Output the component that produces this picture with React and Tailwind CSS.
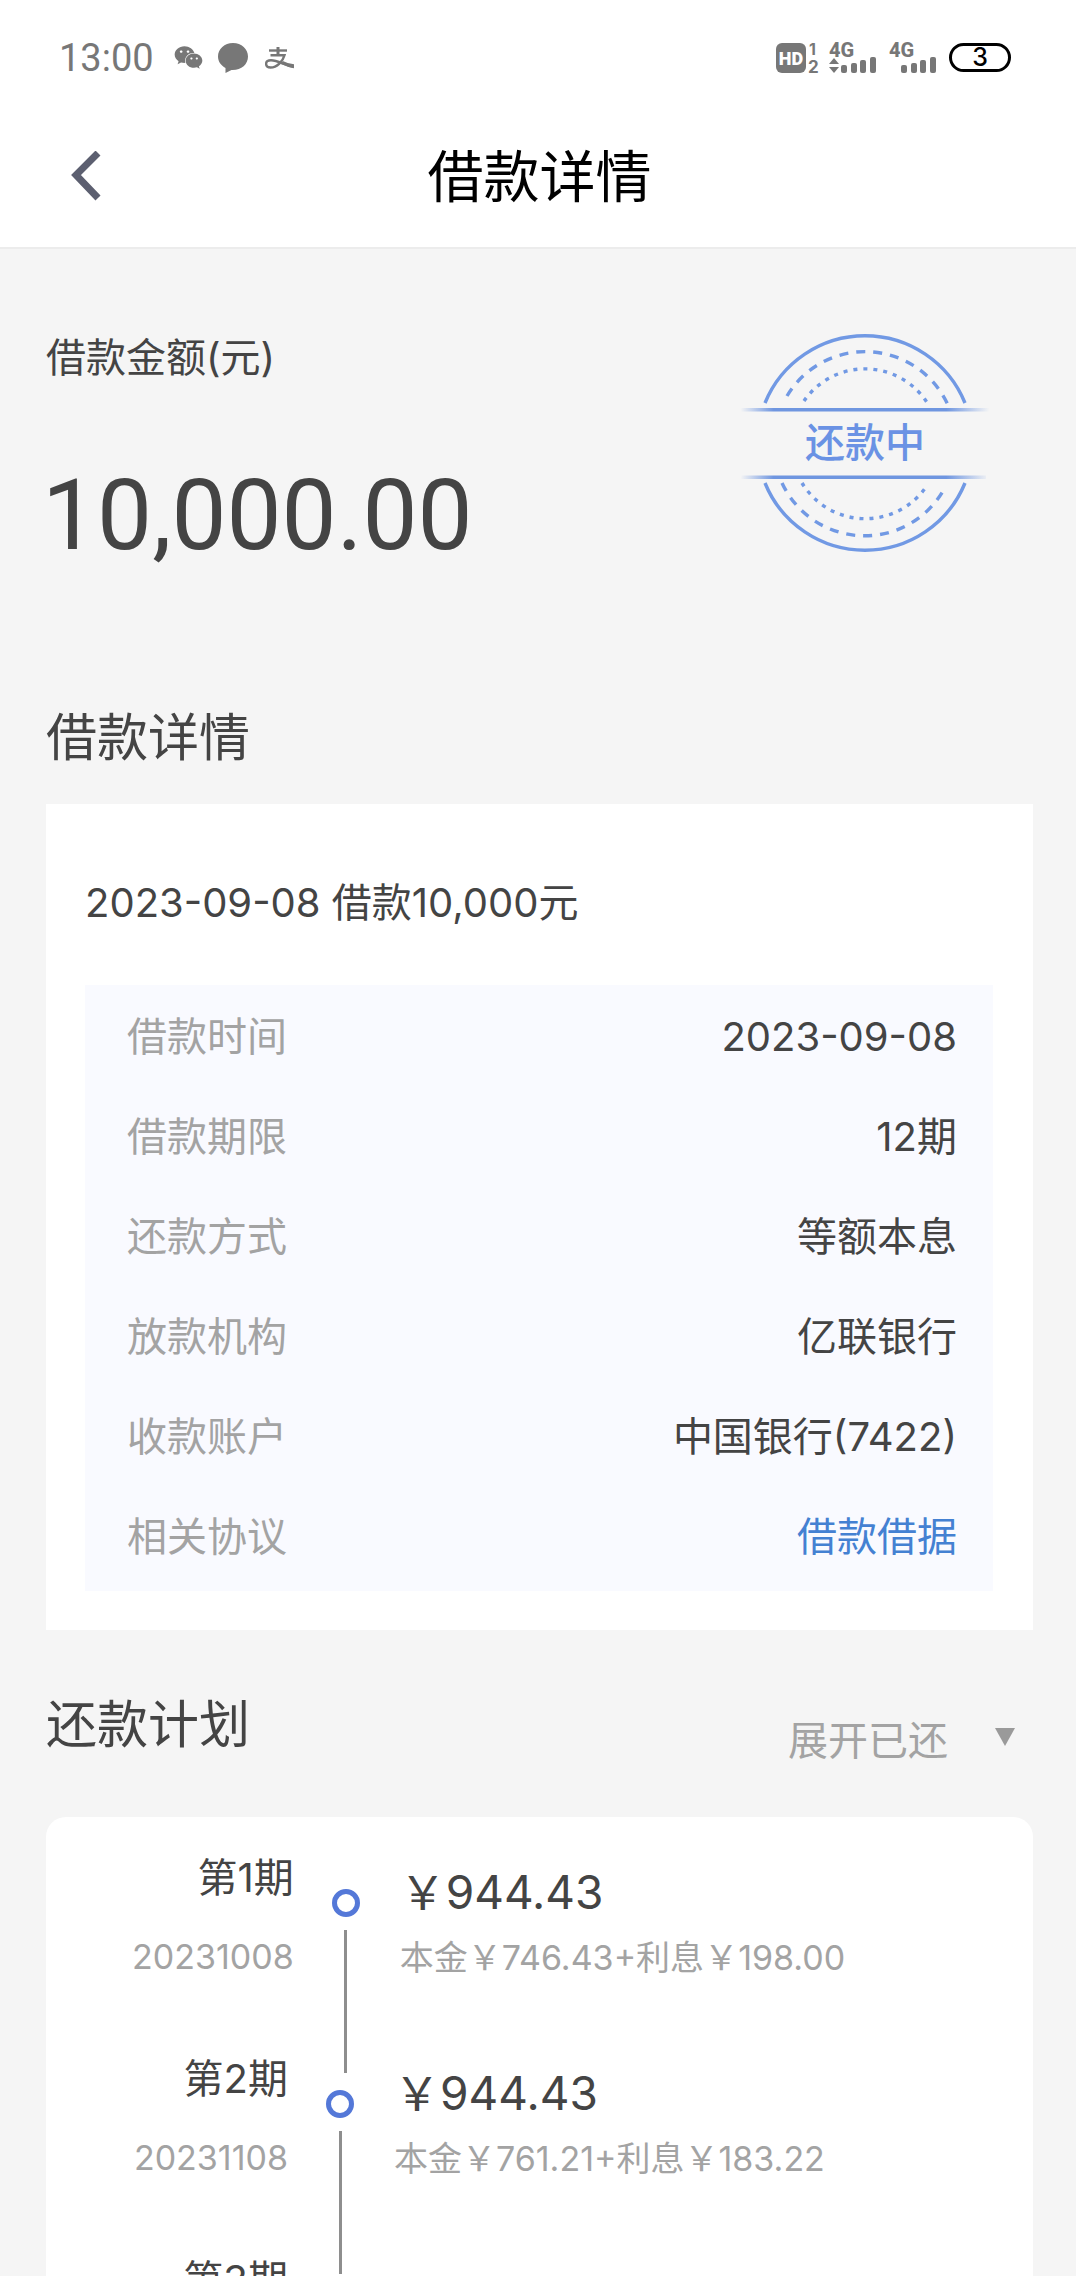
import { useState } from "react";
import { FaWeixin } from "react-icons/fa";

const YUAN = "\uFFE5";

const detalles = [
  { label: "借款时间", value: "2023-09-08" },
  { label: "借款期限", value: "12期" },
  { label: "还款方式", value: "等额本息" },
  { label: "放款机构", value: "亿联银行" },
  { label: "收款账户", value: "中国银行(7422)" },
  { label: "相关协议", value: "借款借据", href: "#contract" },
];

const cuotas = [
  { id: 1, fecha: "20231008", total: "944.43", capital: "746.43", interes: "198.00" },
  { id: 2, fecha: "20231108", total: "944.43", capital: "761.21", interes: "183.22" },
  { id: 3 },
];

function SignalBars({ arrows = false }) {
  return (
    <svg className="overflow-visible" width="48" height="32" viewBox="0 0 48 32" fill="#777777" aria-hidden="true">
      <text x="0" y="15" fontSize="20" fontWeight="800" fontFamily="Roboto, sans-serif">
        4G
      </text>
      {arrows && (
        <>
          <path d="M0 22 L5 16 L10 22 Z" />
          <path d="M0 25 L5 31 L10 25 Z" />
        </>
      )}
      <rect x="12" y="23" width="6" height="8" rx="2" />
      <rect x="22" y="21" width="6" height="10" rx="2" />
      <rect x="31" y="18" width="6" height="13" rx="2" />
      <rect x="41" y="15" width="6" height="16" rx="2" />
    </svg>
  );
}

function StatusBar() {
  return (
    <div className="flex h-[115px] items-center justify-between pl-[59px] pr-[65px] text-[#777777]">
      <div className="flex items-center">
        <span className="font-[Roboto,sans-serif] text-[38px] leading-none">13:00</span>
        <FaWeixin className="ml-5 size-[29px]" />
        <svg className="ml-[15px]" width="30" height="30" viewBox="0 0 30 30" fill="currentColor" aria-hidden="true">
          <path d="M15 0 C6.500 0 0 6 0 13.500 C0 18.500 3 22.500 7.500 25 L7.500 30 L13.500 27 C23 27.500 30 21.500 30 13.500 C30 6 23.500 0 15 0 Z" />
        </svg>
        <svg
          className="ml-[17px]"
          width="29"
          height="22"
          viewBox="0 0 29 22"
          fill="none"
          stroke="currentColor"
          strokeWidth="2.400"
          aria-hidden="true"
        >
          <path d="M4 3.500 H22" />
          <path d="M13 0 V8" strokeWidth="3" />
          <path d="M5.500 8.300 H19.500 C18 14 12 20.500 5.500 20.500 C2.500 20.500 1.100 18.800 1.100 16.800 C1.100 14.500 3.200 13.200 6 13.200 C13 13.200 20 18.500 29 20" />
          <path d="M17 15.500 C21 17.500 25 18.800 29 19" strokeWidth="3.400" />
        </svg>
      </div>
      <div className="flex items-center">
        <svg className="overflow-visible" width="44" height="32" viewBox="0 0 44 32" fill="#777777" aria-hidden="true">
          <rect x="0" y="1" width="30" height="30" rx="6" />
          <text x="15" y="23" fontSize="18" fontWeight="900" fill="#ffffff" textAnchor="middle" fontFamily="Roboto, sans-serif">
            HD
          </text>
          <text x="33" y="13" fontSize="16" fontWeight="700" fontFamily="Inter, sans-serif">
            1
          </text>
          <text x="32" y="31" fontSize="17" fontWeight="700" fontFamily="Inter, sans-serif">
            2
          </text>
        </svg>
        <div className="ml-[9px] flex gap-3">
          <SignalBars arrows />
          <SignalBars />
        </div>
        <div className="ml-3 flex h-[29px] w-[62px] items-center justify-center rounded-full border-[3px] border-black text-[25px] font-medium leading-none text-black">
          3
        </div>
      </div>
    </div>
  );
}

function Stamp() {
  return (
    <svg width="254" height="222" viewBox="0 0 254 222" fill="none" stroke="#7199e4" role="img" aria-label="还款中">
      <defs>
        <linearGradient id="fade" gradientUnits="userSpaceOnUse" x1="0" y1="0" x2="254" y2="0">
          <stop offset="0.010" stopColor="#6f96e0" stopOpacity="0" />
          <stop offset="0.140" stopColor="#6f96e0" />
          <stop offset="0.820" stopColor="#6f96e0" />
          <stop offset="0.990" stopColor="#6f96e0" stopOpacity="0" />
        </linearGradient>
      </defs>
      {/* Semicírculo superior */}
      <path d="M27 72 A108 108 0 0 1 227 72" strokeWidth="3.400" />
      <path d="M49 65 A91 91 0 0 1 210 74" strokeWidth="3.400" strokeDasharray="9 8" />
      <path d="M66 70 A74 74 0 0 1 190 73" strokeWidth="3.400" strokeDasharray="4 6" />
      {/* Semicírculo inferior */}
      <path d="M27 152 A108 108 0 0 0 227 152" strokeWidth="3.400" />
      <path d="M44 152 A91 91 0 0 0 205 160" strokeWidth="3.400" strokeDasharray="9 8" />
      <path d="M64 152 A74 74 0 0 0 188 156" strokeWidth="3.400" strokeDasharray="4 6" />
      <rect x="3" y="77" width="248" height="3.500" fill="url(#fade)" stroke="none" />
      <rect x="0" y="144.500" width="248" height="3.500" fill="url(#fade)" stroke="none" />
      <text
        x="127"
        y="126"
        fontSize="40"
        fontWeight="500"
        fill="#6a92e4"
        stroke="none"
        textAnchor="middle"
        fontFamily="'Noto Sans CJK SC', sans-serif"
      >
        还款中
      </text>
    </svg>
  );
}

function CuotaItem({ cuota }) {
  return (
    <li className="-mb-6 flex items-start">
      <div className="flex min-w-[156px] flex-col items-end gap-[25px]">
        <span className="text-[40px] leading-[60px]">第{cuota.id}期</span>
        {cuota.fecha && <span className="text-[34px] leading-[48px] text-[#a3a3a3]">{cuota.fecha}</span>}
      </div>
      {cuota.total && (
        <>
          <div className="ml-[38px] mt-[41px] flex flex-col items-center gap-[13px]">
            <span className="size-7 rounded-full border-[5px] border-[#5478d8]" />
            <span className="h-[143px] w-[3px] bg-[#8e8e8e]" />
          </div>
          <div className="ml-10 mt-[14px] flex flex-col gap-3">
            <span className="text-[46px] leading-[60px]">
              {YUAN}
              {cuota.total}
            </span>
            <span className="text-[34px] leading-[48px] text-[#a3a3a3]">
              本金{YUAN}
              {cuota.capital}+利息{YUAN}
              {cuota.interes}
            </span>
          </div>
        </>
      )}
    </li>
  );
}

export default function App() {
  const [expandido, setExpandido] = useState(false);

  return (
    <div className="flex h-screen flex-col overflow-hidden bg-[#f5f5f5] font-[Inter,'Noto_Sans_CJK_SC',sans-serif] text-[#444444]">
      <header className="shrink-0 border-b-2 border-[#ececec] bg-white">
        <StatusBar />
        <div className="grid h-[132px] grid-cols-[1fr_auto_1fr] items-center pb-2 pl-[71px] pr-[68px]">
          <button type="button" aria-label="返回" className="justify-self-start">
            <svg width="30" height="52" viewBox="0 0 30 52" fill="none" stroke="#5c5f70" strokeWidth="7">
              <path d="M27 2 L5 24 L27 47" />
            </svg>
          </button>
          <h1 className="text-[56px] leading-[80px] text-black">借款详情</h1>
        </div>
      </header>

      <main className="pl-[46px] pr-[43px]">
        {/* Importe del préstamo */}
        <section className="flex items-start justify-between pr-[41px] pt-[79px]">
          <div>
            <p className="text-[40px] leading-[60px]">借款金额(元)</p>
            <p className="-ml-1 mt-[68px] font-[Roboto,sans-serif] text-[98px] leading-[120px]">10,000.00</p>
          </div>
          <div className="pt-[3px]">
            <Stamp />
          </div>
        </section>

        {/* Detalle */}
        <section className="mt-[122px]">
          <h2 className="text-[51px] leading-[80px]">借款详情</h2>
          <div className="mt-[26px] bg-white pb-[39px] pl-[39px] pr-10 pt-[69px]">
            <p className="text-[40px] leading-[60px]">2023-09-08 借款10,000元</p>
            <dl className="mt-[52px] bg-[#f9faff] pb-1 pl-[42px] pr-9 pt-[2px]">
              {detalles.map((item) => (
                <div key={item.label} className="flex h-[100px] items-center justify-between text-[40px]">
                  <dt className="text-[#a3a3a3]">{item.label}</dt>
                  <dd>
                    {item.href ? (
                      <a href={item.href} className="text-[#4481d2]">
                        {item.value}
                      </a>
                    ) : (
                      item.value
                    )}
                  </dd>
                </div>
              ))}
            </dl>
          </div>
        </section>

        {/* Plan de pagos */}
        <section className="mt-[55px]">
          <div className="flex justify-between">
            <h2 className="text-[51px] leading-[80px]">还款计划</h2>
            <button
              type="button"
              aria-expanded={expandido}
              onClick={() => setExpandido(!expandido)}
              className="mt-[26px] flex items-center gap-[47px] pr-[18px] text-[40px] leading-[60px] text-[#a3a3a3]"
            >
              展开已还
              <svg className="mb-2" width="20" height="18" viewBox="0 0 20 18" fill="#9a9a9a" aria-hidden="true">
                <path d="M0 0 H20 L10 18 Z" />
              </svg>
            </button>
          </div>
          <ul className="mt-[46px] min-h-[500px] rounded-t-[20px] bg-white pl-[86px] pt-[31px]">
            {cuotas.map((cuota) => (
              <CuotaItem key={cuota.id} cuota={cuota} />
            ))}
          </ul>
        </section>
      </main>
    </div>
  );
}
